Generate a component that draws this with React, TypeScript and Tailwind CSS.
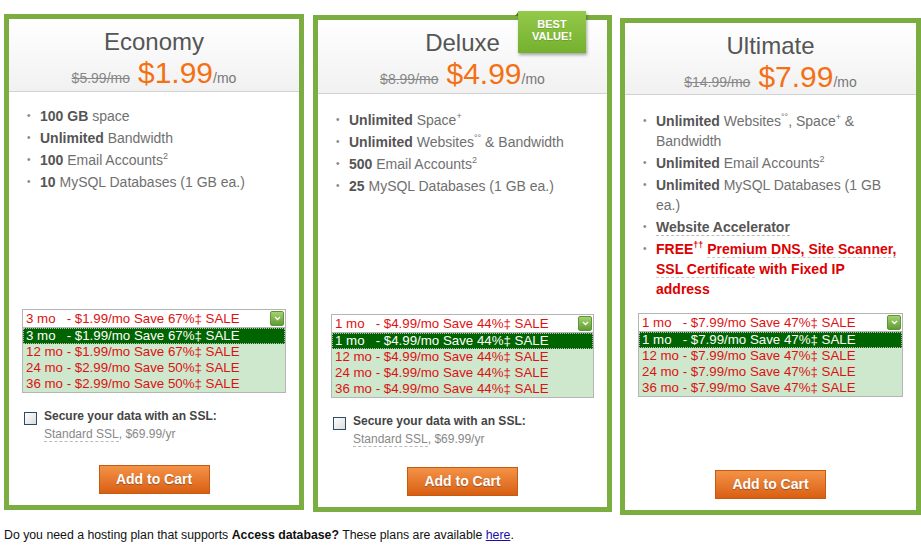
import React from "react";

type Plan = {
  name: string;
  oldPrice: string;
  price: string;
  features: React.ReactNode[];
  options: string[];
  ssl: boolean;
  mt: string;
  cardW: string;
  cardH: string;
  headH: string;
  featH: string;
  featPt: string;
  badge?: boolean;
};

const B = ({ children }: { children: React.ReactNode }) => (
  <span className="font-bold text-[#555]">{children}</span>
);

// small raised mark (footnote markers)
const Sup = ({ children }: { children: React.ReactNode }) => (
  <span className="inline-block text-[9px] leading-none align-top mt-[2px]">{children}</span>
);

const plans: Plan[] = [
  {
    name: "Economy",
    oldPrice: "$5.99/mo",
    price: "$1.99",
    features: [
      <><B>100 GB</B> space</>,
      <><B>Unlimited</B> Bandwidth</>,
      <><B>100</B> Email Accounts<Sup>2</Sup></>,
      <><B>10</B> MySQL Databases (1 GB ea.)</>,
    ],
    options: [
      "3 mo   - $1.99/mo Save 67%\u2021 SALE",
      "12 mo - $1.99/mo Save 67%\u2021 SALE",
      "24 mo - $2.99/mo Save 50%\u2021 SALE",
      "36 mo - $2.99/mo Save 50%\u2021 SALE",
    ],
    ssl: true,
    mt: "mt-[14px]",
    cardW: "w-[300px]",
    cardH: "h-[496px]",
    headH: "h-[73px]",
    featH: "h-[217px]",
    featPt: "pt-[14px]",
  },
  {
    name: "Deluxe",
    oldPrice: "$8.99/mo",
    price: "$4.99",
    features: [
      <><B>Unlimited</B> Space<Sup>+</Sup></>,
      <><B>Unlimited</B> Websites<Sup>°°</Sup> &amp; Bandwidth</>,
      <><B>500</B> Email Accounts<Sup>2</Sup></>,
      <><B>25</B> MySQL Databases (1 GB ea.)</>,
    ],
    options: [
      "1 mo   - $4.99/mo Save 44%\u2021 SALE",
      "12 mo - $4.99/mo Save 44%\u2021 SALE",
      "24 mo - $4.99/mo Save 44%\u2021 SALE",
      "36 mo - $4.99/mo Save 44%\u2021 SALE",
    ],
    ssl: true,
    mt: "mt-[15px]",
    cardW: "w-[299px]",
    cardH: "h-[497px]",
    headH: "h-[74px]",
    featH: "h-[220px]",
    featPt: "pt-[16px]",
    badge: true,
  },
  {
    name: "Ultimate",
    oldPrice: "$14.99/mo",
    price: "$7.99",
    features: [
      <><B>Unlimited</B> Websites<Sup>°°</Sup>, Space<Sup>+</Sup> &amp; Bandwidth</>,
      <><B>Unlimited</B> Email Accounts<Sup>2</Sup></>,
      <><B>Unlimited</B> MySQL Databases (1 GB ea.)</>,
      <span className="font-bold text-[#555] border-b border-dashed border-[#bbb]">Website Accelerator</span>,
      <span className="font-bold text-[#dd0000]">
        FREE<Sup>††</Sup>{" "}
        <span className="border-b border-dashed border-[#ccc]">Premium DNS, Site Scanner,</span>{" "}
        <span className="border-b border-dashed border-[#ccc]">SSL Certificate</span> with Fixed IP address
      </span>,
    ],
    options: [
      "1 mo   - $7.99/mo Save 47%\u2021 SALE",
      "12 mo - $7.99/mo Save 47%\u2021 SALE",
      "24 mo - $7.99/mo Save 47%\u2021 SALE",
      "36 mo - $7.99/mo Save 47%\u2021 SALE",
    ],
    ssl: false,
    mt: "mt-[18px]",
    cardW: "w-[301px]",
    cardH: "h-[497px]",
    headH: "h-[72px]",
    featH: "h-[218px]",
    featPt: "pt-[16px]",
  },
];

function Chevron() {
  return (
    <span className="w-[14px] h-[15px] rounded-[2px] border border-[#5d9634] bg-gradient-to-b from-[#a6d16f] to-[#5f9d35] flex items-center justify-center">
      <svg width="7" height="5" viewBox="0 0 7 5">
        <path d="M1 1 L3.5 3.5 L6 1" stroke="#fff" strokeWidth="1.3" fill="none" />
      </svg>
    </span>
  );
}

function Badge() {
  return (
    <div className="absolute left-[197px] -top-[9px] w-[71px] h-[42px]">
      <div className="absolute left-0 top-0 w-0 h-0 border-l-[4px] border-l-transparent border-b-[5px] border-b-[#4f7d1e]" />
      <div className="absolute left-[3px] top-0 right-0 bottom-0 bg-gradient-to-b from-[#94c94a] to-[#74b02e] shadow-[1px_2px_3px_rgba(0,0,0,0.35)] flex flex-col items-center justify-center pb-[5px]">
        <span className="text-white font-bold text-[11px] leading-[12px] [text-shadow:0_1px_0_rgba(0,0,0,0.15)]">BEST</span>
        <span className="text-white font-bold text-[11px] leading-[12px] [text-shadow:0_1px_0_rgba(0,0,0,0.15)]">VALUE!</span>
      </div>
    </div>
  );
}

function PlanCard({ plan }: { plan: Plan }) {
  return (
    <div
      className={`relative ${plan.mt} ${plan.cardW} ${plan.cardH} border-[5px] border-[#7bad40] bg-white flex flex-col shrink-0`}
    >
      {plan.badge && <Badge />}
      <div
        className={`${plan.headH} shrink-0 border-b border-[#d2d2d2] bg-gradient-to-b from-white to-[#f1f1f1] flex flex-col items-center pt-[8px]`}
      >
        <div className="text-[24px] leading-[30px] text-[#555]">{plan.name}</div>
        <div className="flex items-baseline leading-[32px]">
          <span className="text-[14px] text-[#888] line-through mr-[8px]">{plan.oldPrice}</span>
          <span className="text-[30px] text-[#f47014]">{plan.price}</span>
          <span className="text-[14px] text-[#777]">/mo</span>
        </div>
      </div>

      <div className={`${plan.featH} ${plan.featPt} shrink-0`}>
        <ul className="pl-[18px] pr-[14px]">
          {plan.features.map((f, i) => (
            <li key={i} className="flex text-[14px] leading-[20px] text-[#707070] mb-[2px]">
              <span className="w-[13px] shrink-0 text-[10px] text-[#888]">•</span>
              <span>{f}</span>
            </li>
          ))}
        </ul>
      </div>

      <div className="mx-[13px] text-[13.3px] text-[#dd1111] whitespace-pre">
        <div className="h-[19px] border border-[#b5b5b5] bg-white flex items-center justify-between pl-[3px] pr-[1px]">
          <span className="leading-[16px]">{plan.options[0]}</span>
          <Chevron />
        </div>
        <div className="border border-t-0 border-[#b5b5b5] bg-[#cde8cd]">
          {plan.options.map((o, i) => (
            <div
              key={i}
              className={`h-[16px] leading-[16px] pl-[3px] ${
                i === 0 ? "bg-[#006400] text-white outline outline-1 outline-dotted outline-[#bbb] -outline-offset-1" : ""
              }`}
            >
              {o}
            </div>
          ))}
        </div>
      </div>

      {plan.ssl && (
        <div className="flex items-start mt-[14px] ml-[15px]">
          <span className="mt-[5px] w-[13px] h-[13px] border border-[#2e4b66] bg-gradient-to-br from-white to-[#dcdcdc] shrink-0" />
          <div className="ml-[7px] text-[12px] leading-[18px]">
            <div className="font-bold text-[#444]">Secure your data with an SSL:</div>
            <div className="text-[#888]">
              <span className="border-b border-dashed border-[#bbb]">Standard SSL</span>, $69.99/yr
            </div>
          </div>
        </div>
      )}

      <div className="mt-auto mb-[11px] flex justify-center">
        <button className="w-[111px] h-[29px] border border-[#c55a12] bg-gradient-to-b from-[#f39245] to-[#d95f0f] text-white font-bold text-[14px] [text-shadow:0_1px_1px_rgba(0,0,0,0.3)]">
          Add to Cart
        </button>
      </div>
    </div>
  );
}

export default function App() {
  return (
    <div className="w-[921px] h-[551px] bg-white overflow-hidden font-['Liberation_Sans',Arial,sans-serif]">
      <div className="flex items-start pl-[4px] gap-[9px]">
        <PlanCard plan={plans[0]} />
        <PlanCard plan={plans[1]} />
        <div className="-ml-[1px]">
          <PlanCard plan={plans[2]} />
        </div>
      </div>
      <p className="mt-[12px] ml-[4px] text-[12.3px] leading-[16px] text-[#111]">
        Do you need a hosting plan that supports <b>Access database?</b> These plans are available{" "}
        <a href="#" className="text-[#1a0dab] underline">here</a>.
      </p>
    </div>
  );
}
